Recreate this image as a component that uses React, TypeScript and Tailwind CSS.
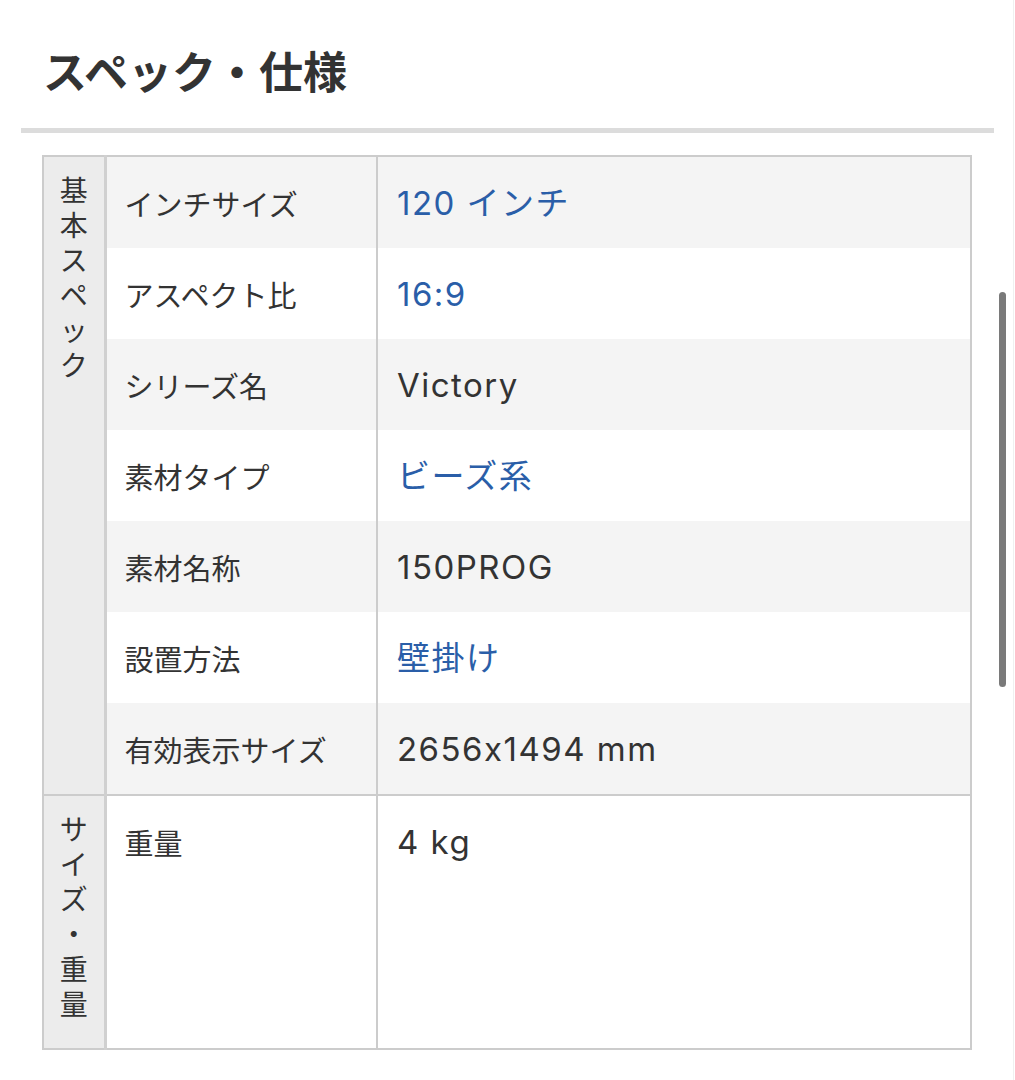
import React from 'react';

type Row = { label: string; value: string; link?: boolean };
type Group = { name: string; rows: Row[] };

const groups: Group[] = [
  {
    name: '基本スペック',
    rows: [
      { label: 'インチサイズ', value: '120 インチ', link: true },
      { label: 'アスペクト比', value: '16:9', link: true },
      { label: 'シリーズ名', value: 'Victory' },
      { label: '素材タイプ', value: 'ビーズ系', link: true },
      { label: '素材名称', value: '150PROG' },
      { label: '設置方法', value: '壁掛け', link: true },
      { label: '有効表示サイズ', value: '2656x1494 mm' },
    ],
  },
  {
    name: 'サイズ・重量',
    rows: [{ label: '重量', value: '4 kg' }],
  },
];

function VerticalLabel({ text }: { text: string }) {
  return (
    <div className="flex flex-col items-center">
      {Array.from(text).map((ch, i) => (
        <div key={i} className="leading-[35px] text-[28px] text-[#333333]">{ch}</div>
      ))}
    </div>
  );
}

export default function App() {
  return (
    <div className="min-h-screen bg-white relative font-['Inter','Noto_Sans_CJK_JP',sans-serif] [font-feature-settings:'calt'_0]">
      <div className="px-[21px] pb-[30px]">
        <h2 className="pl-[22px] pt-[48px] text-[44px] leading-[44px] font-bold text-[#333333] font-['Noto_Sans_CJK_JP',sans-serif]">
          スペック・仕様
        </h2>
        <div className="mt-[36px] h-[5px] bg-[#dcdcdc]" />
        <div className="pl-[21px] pr-[22px] pt-[22px]">
          <table className="w-full border-collapse border-2 border-[#cccccc]">
            <tbody>
              {groups.map(g =>
                g.rows.map((r, i) => (
                  <tr key={g.name + r.label} className={`${i === 0 ? 'border-t-2 border-[#cccccc]' : ''} ${i % 2 === 0 && g.rows.length > 1 ? 'bg-[#f4f4f4]' : 'bg-white'}`}>
                    {i === 0 && (
                      <td rowSpan={g.rows.length} className="w-[62px] align-top bg-[#ececec] border-r-[3px] border-[#d0d0d0] pt-[17px] pb-[25px]">
                        <VerticalLabel text={g.name} />
                      </td>
                    )}
                    <td className="w-[272px] align-top border-r-2 border-[#cccccc] pl-[18px] pt-[26px] pb-[25px] leading-[40px] text-[29px] text-[#333333] font-['Noto_Sans_CJK_JP',sans-serif]">
                      {r.label}
                    </td>
                    <td className={`align-top pl-[19px] pt-[26px] pb-[25px] leading-[40px] text-[33px] tracking-[0.045em] ${r.link ? 'text-[#2a5ea8]' : 'text-[#333333]'}`}>
                      {r.value}
                    </td>
                  </tr>
                ))
              )}
            </tbody>
          </table>
        </div>
      </div>
      <div className="absolute left-[999px] top-[292px] w-[7px] h-[395px] rounded-full bg-[#7a7a7a]" />
      <div className="absolute right-[1px] top-0 bottom-0 w-px bg-[#f0f0f0]" />
    </div>
  );
}
